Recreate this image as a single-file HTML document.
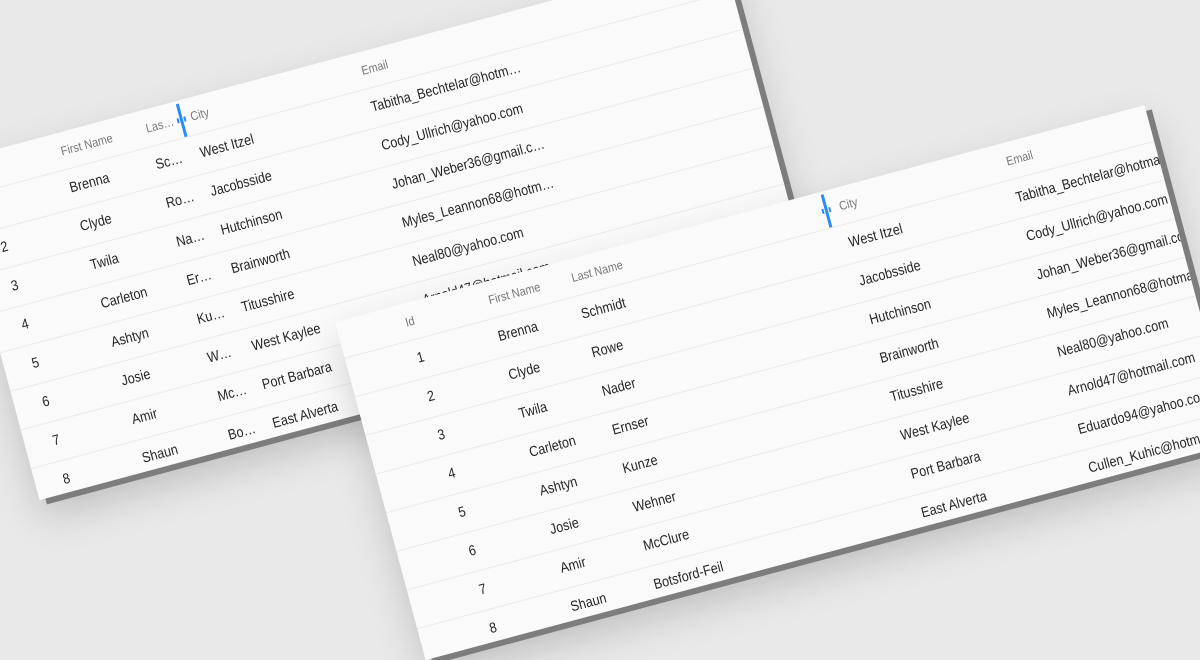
<!DOCTYPE html>
<html><head><meta charset="utf-8"><style>
html,body{margin:0;padding:0}
body{width:1200px;height:630px;overflow:hidden;background:#e9e9e9;position:relative;font-family:"Liberation Sans",Arial,sans-serif}
.p{position:absolute;background:#fafafa;transform-origin:0 0;transform:rotate(-15deg);overflow:hidden;box-shadow:6px 6px 0 #7d7d7d,0 18px 40px rgba(0,0,0,.18)}
.r{position:absolute;left:0;right:0;height:40px;border-bottom:1px solid #ebebeb;box-sizing:border-box}
.r span{position:absolute;top:0;line-height:39px;font-size:14.5px;color:#262626;white-space:nowrap;overflow:hidden;text-overflow:ellipsis;transform:scaleX(.87);transform-origin:0 50%}
.h{top:0;height:38px}
.h span{line-height:38px;font-size:12.5px;color:#777}
.bar{position:absolute;top:3px;width:3px;height:34px;background:#2b8bf7}
.bar:after{content:"";position:absolute;left:-3px;top:14px;width:9px;height:5px;border-left:2px solid #2b8bf7;border-right:2px solid #2b8bf7;box-sizing:border-box}
</style></head><body>

<div class="p" style="left:-51px;top:162px;width:801px;height:350px">
<div class="r h"><span style="left:28px">Id</span><span style="left:111px">First Name</span><span style="left:199px;width:34px">Last Name</span><span style="left:245px">City</span><span style="left:422px">Email</span><div class="bar" style="left:234px"></div></div>
<div class="r" style="top:38px"><span style="left:28px">1</span><span style="left:110px">Brenna</span><span style="left:199px;width:34px">Schmidt</span><span style="left:245px">West Itzel</span><span style="left:422px;width:185px">Tabitha_Bechtelar@hotmail.com</span></div>
<div class="r" style="top:78px"><span style="left:28px">2</span><span style="left:110px">Clyde</span><span style="left:199px;width:34px">Rowe</span><span style="left:245px">Jacobsside</span><span style="left:422px;width:185px">Cody_Ullrich@yahoo.com</span></div>
<div class="r" style="top:118px"><span style="left:28px">3</span><span style="left:110px">Twila</span><span style="left:199px;width:34px">Nader</span><span style="left:245px">Hutchinson</span><span style="left:422px;width:185px">Johan_Weber36@gmail.com</span></div>
<div class="r" style="top:158px"><span style="left:28px">4</span><span style="left:110px">Carleton</span><span style="left:199px;width:34px">Ernser</span><span style="left:245px">Brainworth</span><span style="left:422px;width:185px">Myles_Leannon68@hotmail.com</span></div>
<div class="r" style="top:198px"><span style="left:28px">5</span><span style="left:110px">Ashtyn</span><span style="left:199px;width:34px">Kunze</span><span style="left:245px">Titusshire</span><span style="left:422px;width:185px">Neal80@yahoo.com</span></div>
<div class="r" style="top:238px"><span style="left:28px">6</span><span style="left:110px">Josie</span><span style="left:199px;width:34px">Wehner</span><span style="left:245px">West Kaylee</span><span style="left:422px;width:185px">Arnold47@hotmail.com</span></div>
<div class="r" style="top:278px"><span style="left:28px">7</span><span style="left:110px">Amir</span><span style="left:199px;width:34px">McClure</span><span style="left:245px">Port Barbara</span><span style="left:422px;width:185px">Eduardo94@yahoo.com</span></div>
<div class="r" style="top:318px"><span style="left:28px">8</span><span style="left:110px">Shaun</span><span style="left:199px;width:34px">Botsford-Feil</span><span style="left:245px">East Alverta</span><span style="left:422px;width:185px">Cullen_Kuhic@hotmail.com</span></div>
</div>

<div class="p" style="left:335px;top:322px;width:838px;height:350px">
<div class="r h"><span style="left:68px">Id</span><span style="left:154px">First Name</span><span style="left:240px">Last Name</span><span style="left:517px">City</span><span style="left:690px">Email</span><div class="bar" style="left:502px"></div></div>
<div class="r" style="top:38px"><span style="left:70px">1</span><span style="left:154px">Brenna</span><span style="left:240px">Schmidt</span><span style="left:517px">West Itzel</span><span style="left:690px">Tabitha_Bechtelar@hotmail.com</span></div>
<div class="r" style="top:78px"><span style="left:70px">2</span><span style="left:154px">Clyde</span><span style="left:240px">Rowe</span><span style="left:517px">Jacobsside</span><span style="left:690px">Cody_Ullrich@yahoo.com</span></div>
<div class="r" style="top:118px"><span style="left:70px">3</span><span style="left:154px">Twila</span><span style="left:240px">Nader</span><span style="left:517px">Hutchinson</span><span style="left:690px">Johan_Weber36@gmail.com</span></div>
<div class="r" style="top:158px"><span style="left:70px">4</span><span style="left:154px">Carleton</span><span style="left:240px">Ernser</span><span style="left:517px">Brainworth</span><span style="left:690px">Myles_Leannon68@hotmail.com</span></div>
<div class="r" style="top:198px"><span style="left:70px">5</span><span style="left:154px">Ashtyn</span><span style="left:240px">Kunze</span><span style="left:517px">Titusshire</span><span style="left:690px">Neal80@yahoo.com</span></div>
<div class="r" style="top:238px"><span style="left:70px">6</span><span style="left:154px">Josie</span><span style="left:240px">Wehner</span><span style="left:517px">West Kaylee</span><span style="left:690px">Arnold47@hotmail.com</span></div>
<div class="r" style="top:278px"><span style="left:70px">7</span><span style="left:154px">Amir</span><span style="left:240px">McClure</span><span style="left:517px">Port Barbara</span><span style="left:690px">Eduardo94@yahoo.com</span></div>
<div class="r" style="top:318px"><span style="left:70px">8</span><span style="left:154px">Shaun</span><span style="left:240px">Botsford-Feil</span><span style="left:517px">East Alverta</span><span style="left:690px">Cullen_Kuhic@hotmail.com</span></div>
</div>

</body></html>
